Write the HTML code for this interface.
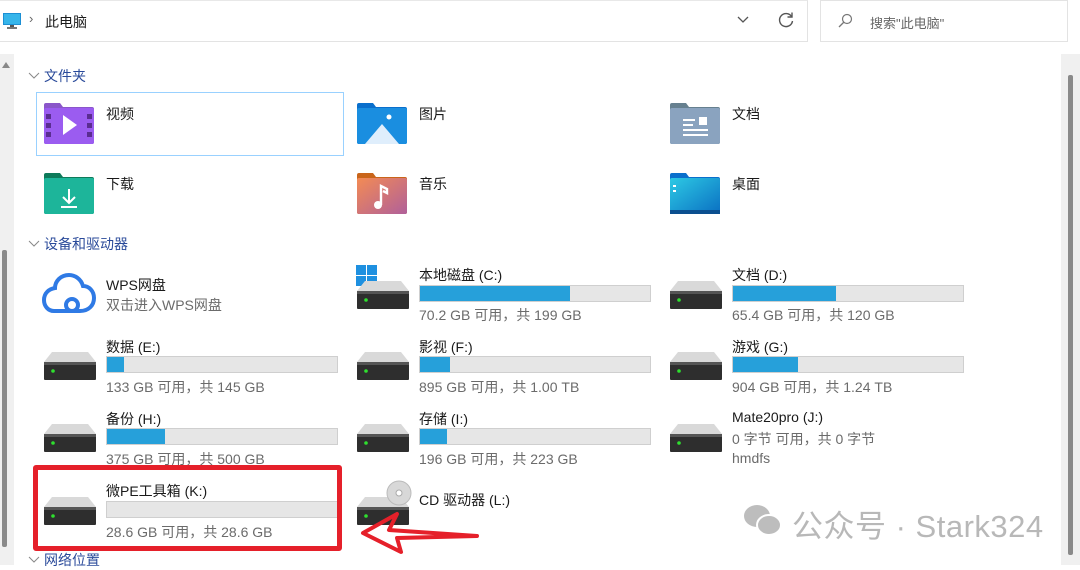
<!DOCTYPE html>
<html><head><meta charset="utf-8"><style>
*{margin:0;padding:0;box-sizing:border-box}
body{width:1080px;height:565px;overflow:hidden;background:#fff;position:relative;font-family:"Liberation Sans","Noto Sans CJK SC",sans-serif;font-size:14px;color:#1a1a1a}
.a{position:absolute;white-space:nowrap}
.sub{color:#6b6b6b}
.bar{position:absolute;width:232px;height:17px;background:#e6e6e6;border:1px solid #cfcfcf}
.bar i{display:block;height:100%;background:#26a0da}
.hd{position:absolute;color:#2a4a9a;font-size:14px}
.drv{position:absolute;width:52px;height:28px}
</style></head><body>
<div class="a" style="left:0;top:0;width:808px;height:42px;border:1px solid #e3e3e3;border-left:none;border-top:1px solid #e8e8e8"></div>
<svg class="a" style="left:3px;top:12px" width="18" height="18" viewBox="0 0 18 18"><rect x="0" y="1" width="18" height="12" fill="#1c8fd4"/><rect x="1" y="2" width="16" height="10" fill="#36b5ea"/><rect x="7" y="13" width="4" height="2" fill="#555"/><rect x="4" y="15" width="10" height="2" fill="#777"/></svg>
<div class="a" style="left:29px;top:11px;color:#666;font-size:13px">›</div>
<div class="a" style="left:45px;top:12px">此电脑</div>
<svg class="a" style="left:736px;top:14px" width="14" height="10"><path d="M2 3l5 5 5-5" stroke="#555" fill="none" stroke-width="1.3"/></svg>
<svg class="a" style="left:777px;top:11px" width="18" height="18" viewBox="0 0 18 18"><path d="M14.5 5.5A6.5 6.5 0 1 0 15.5 10" stroke="#555" fill="none" stroke-width="1.4"/><path d="M15 1.5v4.5h-4.5" stroke="#555" fill="none" stroke-width="1.4"/></svg>
<div class="a" style="left:820px;top:0;width:248px;height:42px;border:1px solid #e3e3e3"></div>
<svg class="a" style="left:837px;top:13px" width="16" height="16"><circle cx="10" cy="6" r="4.5" stroke="#777" fill="none" stroke-width="1.2"/><path d="M7 9l-5 5" stroke="#777" stroke-width="1.3"/></svg>
<div class="a" style="left:870px;top:13px;color:#666;font-size:13px">搜索"此电脑"</div>
<div class="a" style="left:0;top:54px;width:14px;height:511px;background:#f0f0f0"></div>
<div class="a" style="left:2px;top:62px;width:0;height:0;border:4px solid transparent;border-bottom:6px solid #888;border-top:0"></div>
<div class="a" style="left:2px;top:250px;width:5px;height:297px;background:#8a8a8a;border-radius:2px"></div>
<div class="a" style="left:1061px;top:54px;width:19px;height:511px;background:#f0f0f0"></div>
<div class="a" style="left:1068px;top:75px;width:5px;height:480px;background:#8a8a8a;border-radius:2px"></div>
<svg class="a" style="left:28px;top:72px" width="12" height="8"><path d="M1 1l5 5 5-5" stroke="#888" fill="none"/></svg>
<div class="hd" style="left:44px;top:66px">文件夹</div>
<div class="a" style="left:36px;top:92px;width:308px;height:64px;border:1px solid #99d1ff"></div>
<svg class="a" style="left:44px;top:102px" width="50" height="42" viewBox="0 0 50 42"><path d="M0 3a2 2 0 0 1 2-2h14l3 4h29a2 2 0 0 1 2 2v33a2 2 0 0 1-2 2H2a2 2 0 0 1-2-2z" fill="#8a56c9"/><rect x="0" y="6" width="50" height="36" rx="2" fill="#9b5cf0"/><g fill="#5a2d91"><rect x="2" y="12" width="5" height="5"/><rect x="2" y="21" width="5" height="5"/><rect x="2" y="30" width="5" height="5"/><rect x="43" y="12" width="5" height="5"/><rect x="43" y="21" width="5" height="5"/><rect x="43" y="30" width="5" height="5"/></g><path d="M19 13l14 10-14 10z" fill="#fff"/></svg>
<div class="a" style="left:106px;top:104px">视频</div>
<svg class="a" style="left:357px;top:102px" width="50" height="42" viewBox="0 0 50 42"><path d="M0 3a2 2 0 0 1 2-2h14l3 4h29a2 2 0 0 1 2 2v33a2 2 0 0 1-2 2H2a2 2 0 0 1-2-2z" fill="#0a6fcc"/><rect x="0" y="6" width="50" height="36" rx="2" fill="#1a8ee0"/><circle cx="32" cy="15" r="2.5" fill="#fff"/><path d="M8 42l17-20 17 20z" fill="#dfeefc"/></svg>
<div class="a" style="left:419px;top:104px">图片</div>
<svg class="a" style="left:670px;top:102px" width="50" height="42" viewBox="0 0 50 42"><path d="M0 3a2 2 0 0 1 2-2h14l3 4h29a2 2 0 0 1 2 2v33a2 2 0 0 1-2 2H2a2 2 0 0 1-2-2z" fill="#66808f"/><rect x="0" y="6" width="50" height="36" rx="2" fill="#8aa3bf"/><g fill="#fff"><rect x="13" y="17" width="12" height="2"/><rect x="13" y="22" width="10" height="2"/><rect x="13" y="27" width="25" height="2"/><rect x="13" y="32" width="25" height="2"/><rect x="29" y="15" width="8" height="8"/></g></svg>
<div class="a" style="left:732px;top:104px">文档</div>
<svg class="a" style="left:44px;top:172px" width="50" height="42" viewBox="0 0 50 42"><path d="M0 3a2 2 0 0 1 2-2h14l3 4h29a2 2 0 0 1 2 2v33a2 2 0 0 1-2 2H2a2 2 0 0 1-2-2z" fill="#0e7a5a"/><rect x="0" y="6" width="50" height="36" rx="2" fill="#1db59a"/><path d="M25 17v14M19 25l6 6 6-6M17 35h16" stroke="#fff" stroke-width="2" fill="none"/></svg>
<div class="a" style="left:106px;top:174px">下载</div>
<svg class="a" style="left:357px;top:172px" width="50" height="42" viewBox="0 0 50 42"><defs><linearGradient id="m" x1="0" y1="0" x2="1" y2="1"><stop offset="0" stop-color="#f38b54"/><stop offset="1" stop-color="#b0609a"/></linearGradient></defs><path d="M0 3a2 2 0 0 1 2-2h14l3 4h29a2 2 0 0 1 2 2v33a2 2 0 0 1-2 2H2a2 2 0 0 1-2-2z" fill="#c9651a"/><rect x="0" y="6" width="50" height="36" rx="2" fill="url(#m)"/><circle cx="21" cy="33" r="4" fill="#fff"/><path d="M24 33V14l6 3v4l-4-2" stroke="#fff" stroke-width="2.4" fill="none"/></svg>
<div class="a" style="left:419px;top:174px">音乐</div>
<svg class="a" style="left:670px;top:172px" width="50" height="42" viewBox="0 0 50 42"><defs><linearGradient id="d" x1="0" y1="0" x2="1" y2="1"><stop offset="0" stop-color="#2dc9e4"/><stop offset="1" stop-color="#0a6fc2"/></linearGradient></defs><path d="M0 3a2 2 0 0 1 2-2h14l3 4h29a2 2 0 0 1 2 2v33a2 2 0 0 1-2 2H2a2 2 0 0 1-2-2z" fill="#0a6fcc"/><rect x="0" y="6" width="50" height="36" rx="2" fill="url(#d)"/><rect x="0" y="38" width="50" height="4" fill="#0b4f8f"/><rect x="3" y="13" width="3" height="2" fill="#fff"/><rect x="3" y="18" width="3" height="2" fill="#fff"/></svg>
<div class="a" style="left:732px;top:174px">桌面</div>
<svg class="a" style="left:28px;top:240px" width="12" height="8"><path d="M1 1l5 5 5-5" stroke="#888" fill="none"/></svg>
<div class="hd" style="left:44px;top:234px">设备和驱动器</div>
<svg class="a" style="left:42px;top:272px" width="54" height="44" viewBox="0 0 54 44"><path d="M12 39h26c9 0 14-6 14-13s-5-12-11-12c-2-7-8-11-14-11-8 0-14 6-14 13C7 17 2 21 2 28c0 6 4 11 10 11z" stroke="#2f7ae5" stroke-width="4" fill="none"/><circle cx="30" cy="33" r="6" stroke="#2f7ae5" stroke-width="4" fill="none"/></svg>
<div class="a" style="left:106px;top:275px">WPS网盘</div>
<div class="a sub" style="left:106px;top:295px">双击进入WPS网盘</div>
<svg width="0" height="0" style="position:absolute"><defs><g id="dr"><path d="M8 0h36l8 10H0z" fill="#d9d9d9"/><rect x="0" y="10" width="52" height="18" rx="1" fill="#2e2e2e"/><rect x="0" y="10" width="52" height="3" fill="#555"/><circle cx="9" cy="19" r="1.8" fill="#2ee02e"/></g></defs></svg>
<svg class="a" style="left:356px;top:265px" width="22" height="22"><g fill="#1e90e0"><rect x="0" y="0" width="10" height="10"/><rect x="11" y="0" width="10" height="10"/><rect x="0" y="11" width="10" height="10"/><rect x="11" y="11" width="10" height="10"/></g></svg>
<svg class="drv" style="left:357px;top:281px"><use href="#dr"/></svg>
<div class="a" style="left:419px;top:265px">本地磁盘 (C:)</div>
<div class="bar" style="left:419px;top:285px"><i style="width:150px"></i></div>
<div class="a sub" style="left:419px;top:305px">70.2 GB 可用，共 199 GB</div>
<svg class="drv" style="left:670px;top:281px"><use href="#dr"/></svg>
<div class="a" style="left:732px;top:265px">文档 (D:)</div>
<div class="bar" style="left:732px;top:285px"><i style="width:103px"></i></div>
<div class="a sub" style="left:732px;top:305px">65.4 GB 可用，共 120 GB</div>
<svg class="drv" style="left:44px;top:352px"><use href="#dr"/></svg>
<div class="a" style="left:106px;top:337px">数据 (E:)</div>
<div class="bar" style="left:106px;top:356px"><i style="width:17px"></i></div>
<div class="a sub" style="left:106px;top:377px">133 GB 可用，共 145 GB</div>
<svg class="drv" style="left:357px;top:352px"><use href="#dr"/></svg>
<div class="a" style="left:419px;top:337px">影视 (F:)</div>
<div class="bar" style="left:419px;top:356px"><i style="width:30px"></i></div>
<div class="a sub" style="left:419px;top:377px">895 GB 可用，共 1.00 TB</div>
<svg class="drv" style="left:670px;top:352px"><use href="#dr"/></svg>
<div class="a" style="left:732px;top:337px">游戏 (G:)</div>
<div class="bar" style="left:732px;top:356px"><i style="width:65px"></i></div>
<div class="a sub" style="left:732px;top:377px">904 GB 可用，共 1.24 TB</div>
<svg class="drv" style="left:44px;top:424px"><use href="#dr"/></svg>
<div class="a" style="left:106px;top:409px">备份 (H:)</div>
<div class="bar" style="left:106px;top:428px"><i style="width:58px"></i></div>
<div class="a sub" style="left:106px;top:449px">375 GB 可用，共 500 GB</div>
<svg class="drv" style="left:357px;top:424px"><use href="#dr"/></svg>
<div class="a" style="left:419px;top:409px">存储 (I:)</div>
<div class="bar" style="left:419px;top:428px"><i style="width:27px"></i></div>
<div class="a sub" style="left:419px;top:449px">196 GB 可用，共 223 GB</div>
<svg class="drv" style="left:670px;top:424px"><use href="#dr"/></svg>
<div class="a" style="left:732px;top:409px">Mate20pro (J:)</div>
<div class="a sub" style="left:732px;top:429px">0 字节 可用，共 0 字节</div>
<div class="a sub" style="left:732px;top:450px">hmdfs</div>
<svg class="drv" style="left:44px;top:497px"><use href="#dr"/></svg>
<div class="a" style="left:106px;top:481px">微PE工具箱 (K:)</div>
<div class="bar" style="left:106px;top:501px"></div>
<div class="a sub" style="left:106px;top:522px">28.6 GB 可用，共 28.6 GB</div>
<div class="a" style="left:33px;top:465px;width:309px;height:86px;border:5px solid #e5202a;border-radius:3px"></div>
<svg class="drv" style="left:357px;top:497px"><use href="#dr"/></svg>
<svg class="a" style="left:386px;top:480px" width="26" height="26"><circle cx="13" cy="13" r="12" fill="#d8d8d8" stroke="#bbb"/><circle cx="13" cy="13" r="3" fill="#fff" stroke="#aaa"/></svg>
<div class="a" style="left:419px;top:490px">CD 驱动器 (L:)</div>
<svg class="a" style="left:355px;top:505px" width="145" height="50"><path d="M8 28L42 9l-8 16L122 31L42 33L46 47z" stroke="#e5202a" stroke-width="4" fill="none" stroke-linejoin="round"/></svg>
<svg class="a" style="left:742px;top:503px" width="42" height="36"><ellipse cx="15" cy="13" rx="13" ry="11" fill="#bdbdbd"/><ellipse cx="27" cy="22" rx="12" ry="10" fill="#bdbdbd" stroke="#fff" stroke-width="2"/></svg>
<div class="a" style="left:792px;top:501px;font-size:31px;color:#b8b8b8;letter-spacing:0.5px">公众号 · Stark324</div>
<svg class="a" style="left:28px;top:556px" width="12" height="8"><path d="M1 1l5 5 5-5" stroke="#888" fill="none"/></svg>
<div class="hd" style="left:44px;top:550px">网络位置</div>
</body></html>
